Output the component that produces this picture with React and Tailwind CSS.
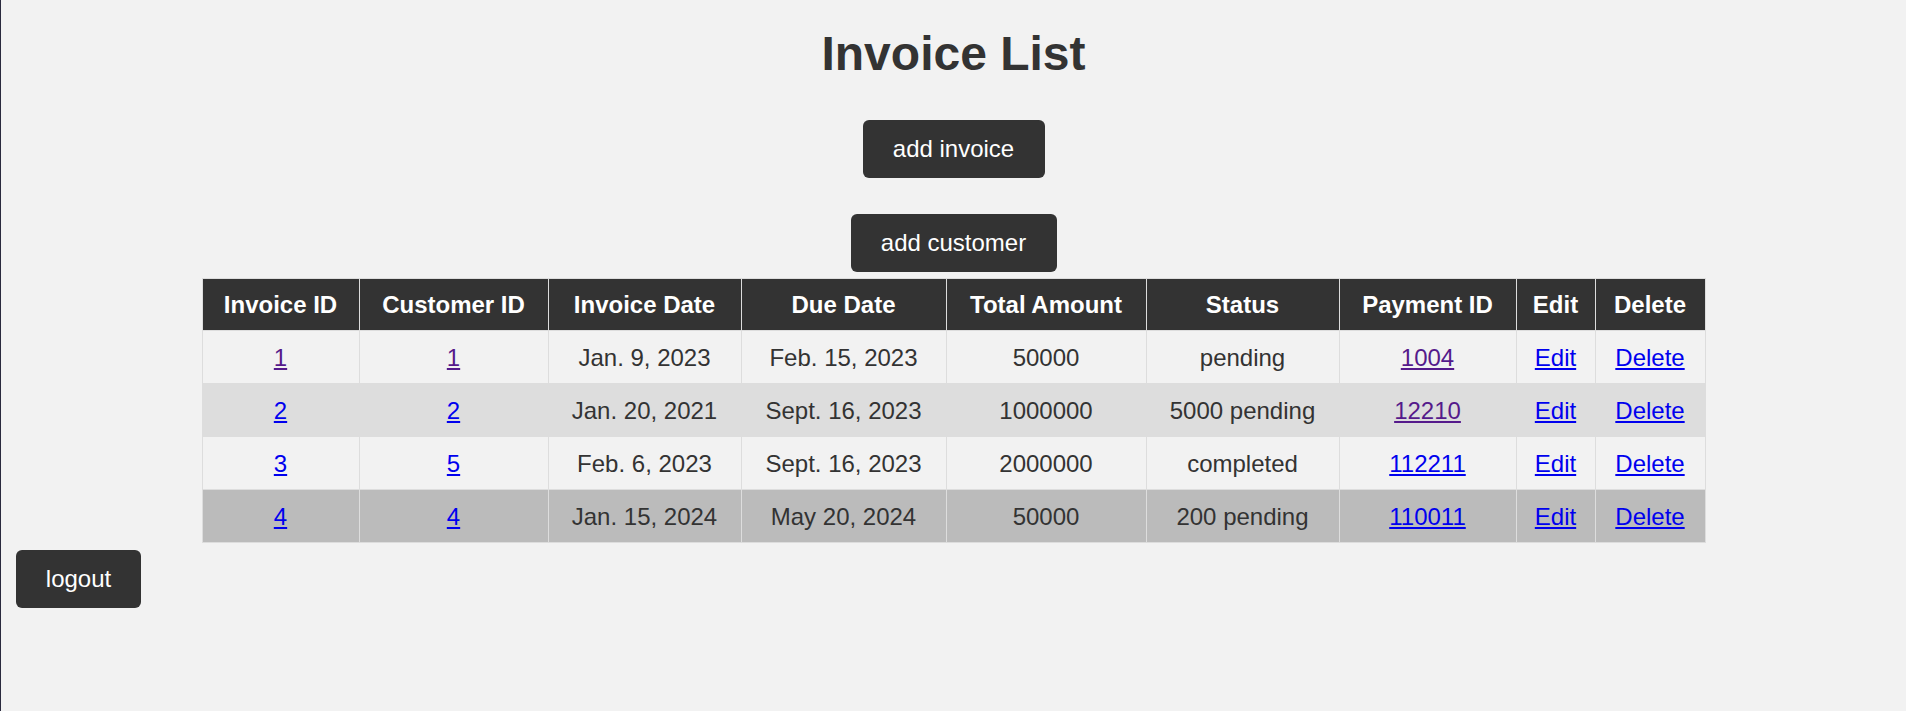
const columns = [
  { label: 'Invoice ID', width: 'w-[157px]' },
  { label: 'Customer ID', width: 'w-[189px]' },
  { label: 'Invoice Date', width: 'w-[193px]' },
  { label: 'Due Date', width: 'w-[205px]' },
  { label: 'Total Amount', width: 'w-[200px]' },
  { label: 'Status', width: 'w-[193px]' },
  { label: 'Payment ID', width: 'w-[177px]' },
  { label: 'Edit', width: 'w-[79px]' },
  { label: 'Delete', width: 'w-[110px]' },
];

const invoices = [
  { id: '1', customer: '1', date: 'Jan. 9, 2023', due: 'Feb. 15, 2023', total: '50000', status: 'pending', payment: '1004', visited: true, paymentVisited: true, bg: 'bg-[#f2f2f2]' },
  { id: '2', customer: '2', date: 'Jan. 20, 2021', due: 'Sept. 16, 2023', total: '1000000', status: '5000 pending', payment: '12210', visited: false, paymentVisited: true, bg: 'bg-[#dddddd]' },
  { id: '3', customer: '5', date: 'Feb. 6, 2023', due: 'Sept. 16, 2023', total: '2000000', status: 'completed', payment: '112211', visited: false, paymentVisited: false, bg: 'bg-[#f2f2f2]' },
  { id: '4', customer: '4', date: 'Jan. 15, 2024', due: 'May 20, 2024', total: '50000', status: '200 pending', payment: '110011', visited: false, paymentVisited: false, bg: 'bg-[#bbbbbb]' },
];

const cell = 'border border-[#dddddd] px-1 pt-[14px] pb-[12px] text-center leading-[26px]';

function Link({ children, visited }) {
  return (
    <a href="#" className={visited ? 'text-[#551a8b] underline' : 'text-[#0000ee] underline'}>
      {children}
    </a>
  );
}

function Button({ children, className = '' }) {
  return (
    <button className={`flex h-[58px] items-center justify-center rounded-[6px] bg-[#333333] text-[24px] leading-[24px] text-white ${className}`}>
      {children}
    </button>
  );
}

export default function App() {
  return (
    <div className="min-h-screen border-l border-[#2a2a3e] bg-[#f2f2f2] font-['Liberation_Sans',Arial,sans-serif] text-[#333333]">
      <h1 className="pt-[30px] text-center text-[48px] font-bold leading-[48px]">Invoice List</h1>

      <div className="mt-[42px] flex justify-center">
        <Button className="w-[182px]">add invoice</Button>
      </div>
      <div className="mt-[36px] flex justify-center">
        <Button className="w-[206px]">add customer</Button>
      </div>

      <table className="mx-auto mt-[6px] w-[1503px] table-fixed border-collapse text-[24px]">
        <colgroup>
          {columns.map((c) => (
            <col key={c.label} className={c.width} />
          ))}
        </colgroup>
        <thead>
          <tr className="bg-[#333333] text-white">
            {columns.map((c) => (
              <th key={c.label} className="border border-[#dddddd] px-1 py-[13px] text-center font-bold leading-[25px]">
                {c.label}
              </th>
            ))}
          </tr>
        </thead>
        <tbody>
          {invoices.map((inv) => (
            <tr key={inv.id} className={inv.bg}>
              <td className={cell}><Link visited={inv.visited}>{inv.id}</Link></td>
              <td className={cell}><Link visited={inv.visited}>{inv.customer}</Link></td>
              <td className={cell}>{inv.date}</td>
              <td className={cell}>{inv.due}</td>
              <td className={cell}>{inv.total}</td>
              <td className={cell}>{inv.status}</td>
              <td className={cell}><Link visited={inv.paymentVisited}>{inv.payment}</Link></td>
              <td className={cell}><Link>Edit</Link></td>
              <td className={cell}><Link>Delete</Link></td>
            </tr>
          ))}
        </tbody>
      </table>

      <div className="mt-[7px] pl-[15px]">
        <Button className="w-[125px]">logout</Button>
      </div>
    </div>
  );
}
